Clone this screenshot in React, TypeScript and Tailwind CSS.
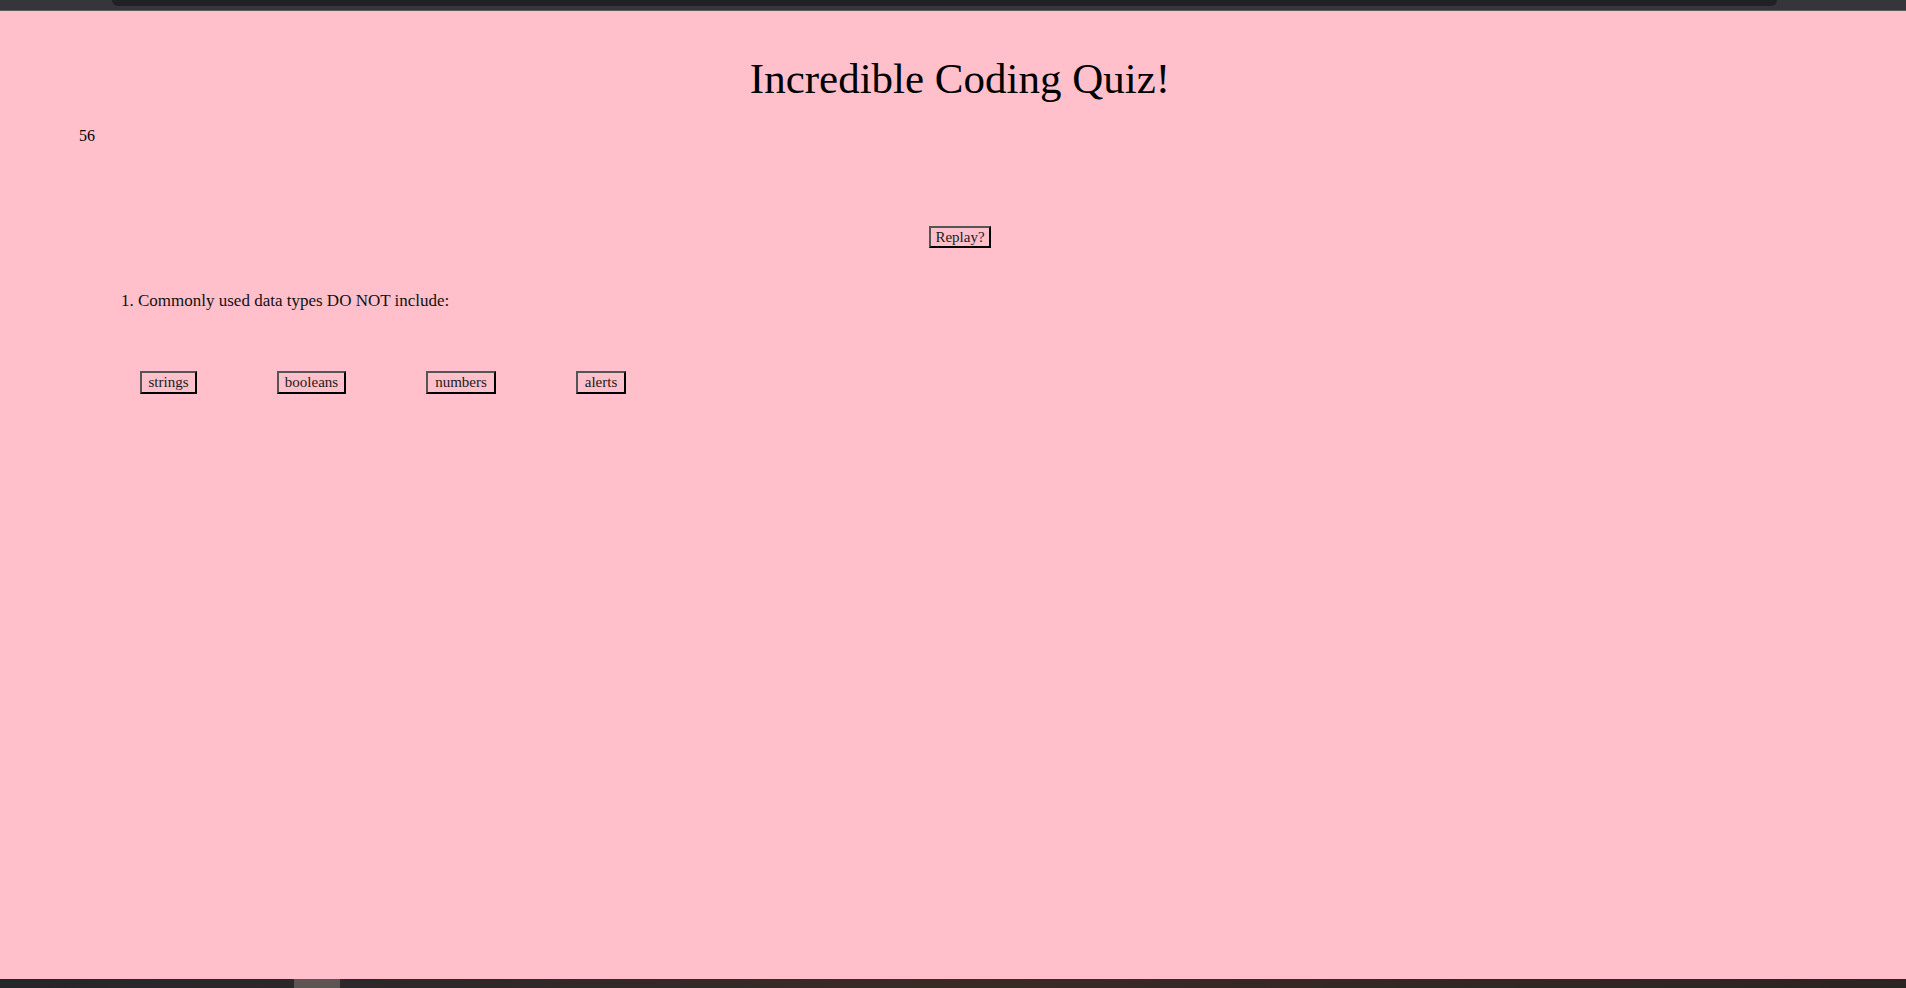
import React from 'react';

const answers = [
  { label: 'strings', width: 'w-[57px]' },
  { label: 'booleans', width: 'w-[69px]' },
  { label: 'numbers', width: 'w-[70px]' },
  { label: 'alerts', width: 'w-[50px]' },
];

const QuizButton = ({ label, width }: { label: string; width: string }) => (
  <button
    className={`${width} border-2 border-[#555] border-r-black border-b-black h-[23px] text-[15px] leading-none text-[#1a1a1a]`}
  >
    {label}
  </button>
);

const App = () => {
  return (
    <div
      className="min-h-screen flex flex-col bg-[#ffc0cb] text-black"
      style={{ fontFamily: '"Liberation Serif", "DejaVu Serif", serif' }}
    >
      {/* browser chrome strip */}
      <div className="h-[10px] bg-[#35363a] px-[112px] flex justify-between">
        <div className="h-[6px] w-[1665px] bg-[#202124] rounded-b-[6px]" />
      </div>
      <div className="h-px bg-[#5d5d60]" />

      <main className="flex-1">
        <h1 className="mt-[43px] pl-[14px] text-center text-[43px] leading-[49px]">
          Incredible Coding Quiz!
        </h1>
        <div className="mt-[24px] pl-[79px] text-[16px] leading-[18px]">56</div>

        <div className="mt-[81px] flex justify-center pl-[14px]">
          <button className="border-2 border-[#555] border-r-black border-b-black w-[62px] h-[22px] text-[15px] leading-none text-[#1a1a1a]">
            Replay?
          </button>
        </div>

        <p className="mt-[43px] pl-[121px] text-[17px] leading-[20px] text-[#111]">
          1. Commonly used data types DO NOT include:
        </p>

        <div className="mt-[60px] pl-[140px] flex gap-[80px]">
          {answers.map((a) => (
            <QuizButton key={a.label} label={a.label} width={a.width} />
          ))}
        </div>
      </main>

      {/* taskbar strip */}
      <div className="h-[9px] flex bg-gradient-to-r from-[#25262a] via-[#3a2a26] to-[#2c2422]">
        <div className="ml-[294px] w-[46px] bg-[#5e5553]" />
      </div>
    </div>
  );
};

export default App;
